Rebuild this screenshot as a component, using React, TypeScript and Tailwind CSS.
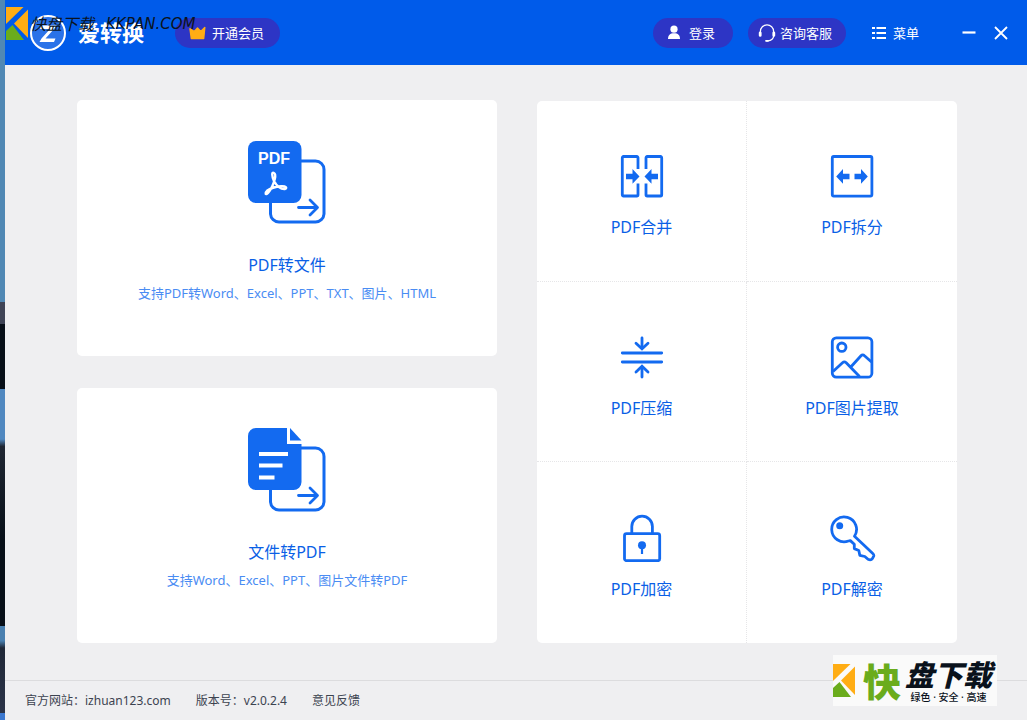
import type { ReactNode } from 'react';

const sans = "font-['Noto_Sans','Noto_Sans_CJK_SC',sans-serif]";

function BrandMark() {
  return (
    <svg width="36" height="36" viewBox="0 0 36 36" fill="none" aria-hidden="true">
      <circle cx="18" cy="18" r="17" fill="#2a72e8" stroke="#fff" strokeWidth="2" />
      <path d="M11 10.5H26.5L24 14L15.5 23.5H25.5L24 27H9.5L11.5 23.5L20 14H10Z" fill="#fff" />
    </svg>
  );
}

function KMark() {
  return (
    <svg width="22" height="33" viewBox="0 0 22 33" className="shrink-0" aria-hidden="true">
      <path d="M0 0H17.5L0 17Z" fill="#ffad14" />
      <path d="M22 2.5V31L8 16.5Z" fill="#ffad14" />
      <path d="M0 33V24L6.5 18L18 33Z" fill="#6aac1c" />
    </svg>
  );
}

function CrownIcon() {
  return (
    <svg width="17" height="14" viewBox="0 0 17 14" fill="#ffad14" stroke="#ffad14" strokeLinejoin="round" aria-hidden="true">
      <path d="M1 2.8L5.3 5.5L8.5 2L11.7 5.5L15.8 1.5L14.7 12.5H2.3Z" strokeWidth="1.4" />
    </svg>
  );
}

function UserIcon() {
  return (
    <svg width="14" height="15" viewBox="0 0 14 15" fill="#fff" aria-hidden="true">
      <circle cx="7" cy="4.2" r="3.6" />
      <path d="M1 14C1 10 3 8.2 7 8.2S13 10 13 14Z" />
    </svg>
  );
}

function HeadsetIcon() {
  return (
    <svg width="18" height="18" viewBox="0 0 18 18" fill="none" stroke="#fff" aria-hidden="true">
      <path d="M2.4 9V7.4A6.6 6.6 0 0 1 15.6 7.4V12C15.6 14.4 13.4 16.8 10 16.8H8.2" strokeWidth="1.2" />
      <path d="M2.2 8.8V11.4M15.8 8.8V11.4" strokeWidth="2.8" strokeLinecap="round" />
      <path d="M8 16.8H10" strokeWidth="1.8" strokeLinecap="round" />
    </svg>
  );
}

function ListIcon() {
  return (
    <svg width="14" height="14" viewBox="0 0 14 14" fill="none" stroke="#fff" strokeWidth="1.8" aria-hidden="true">
      <path d="M0 2H3M0 7H3M0 12H3M4.5 2H14M4.5 7H14M4.5 12H14" />
    </svg>
  );
}

function BackPage({ top, bottom }: { top: number; bottom: number }) {
  const arrowY = bottom - 14.5;
  return (
    <g fill="none" stroke="#136af0" strokeWidth="3">
      <path d={`M53 ${top}H67.5A8.5 8.5 0 0 1 76 ${top + 8.5}V${bottom - 8}A8.5 8.5 0 0 1 67.5 ${bottom}H31A8.5 8.5 0 0 1 22.5 ${bottom - 8}V61`} />
      <path
        d={`M50.5 ${arrowY}H69M62 ${arrowY - 7.5}L69.5 ${arrowY}L62 ${arrowY + 7.5}`}
        strokeWidth="2.8"
        strokeLinecap="round"
        strokeLinejoin="round"
      />
    </g>
  );
}

function PdfToFileIcon() {
  return (
    <svg width="78" height="84" viewBox="0 0 78 84" aria-hidden="true">
      <BackPage top={20} bottom={81} />
      <rect width="53.5" height="62" rx="8" fill="#136af0" />
      <text x="10" y="23" fontSize="16" fontWeight="700" fill="#fff" className="font-['Liberation_Sans',sans-serif]">
        PDF
      </text>
      <path
        d="M26 32C23.5 30.5 23.8 35 26 40C28.5 45 33 48.5 37 48C39.5 47 38 44.8 33 45.2C28 45.6 22 47.5 19 49.8C16.5 52 17.5 54.5 20 52C23 48.5 25.5 43 26.8 38C27.5 35 27.2 32.5 26 32Z"
        fill="none"
        stroke="#fff"
        strokeWidth="2.4"
        strokeLinejoin="round"
      />
    </svg>
  );
}

function FileToPdfIcon() {
  return (
    <svg width="78" height="84" viewBox="0 0 78 84" aria-hidden="true">
      <BackPage top={20} bottom={82} />
      <path d="M39 0H8A8 8 0 0 0 0 8V54A8 8 0 0 0 8 62H45.5A8 8 0 0 0 53.5 54V16H39Z" fill="#136af0" />
      <path d="M39 0H42V13H55V16H39Z" fill="#fff" />
      <path d="M42 0L53.5 12.5H42Z" fill="#136af0" />
      <path d="M11 26H40M11 37.5H34.5M11 49.5H26.5" stroke="#fff" strokeWidth="4" />
    </svg>
  );
}

function ToolSvg({ children }: { children: ReactNode }) {
  return (
    <svg
      width="48"
      height="48"
      viewBox="0 0 48 48"
      fill="none"
      stroke="#136af0"
      strokeWidth="2.8"
      strokeLinecap="butt"
      strokeLinejoin="round"
      aria-hidden="true"
    >
      {children}
    </svg>
  );
}

const tools = [
  {
    label: 'PDF合并',
    icon: (
      <ToolSvg>
        <path d="M20 17V5.8A1.2 1.2 0 0 0 18.8 4.5H5.5A1.2 1.2 0 0 0 4.3 5.8V42.8A1.2 1.2 0 0 0 5.5 44H18.8A1.2 1.2 0 0 0 20 42.8V31.5" />
        <path d="M28 17V5.8A1.2 1.2 0 0 1 29.2 4.5H42.5A1.2 1.2 0 0 1 43.7 5.8V42.8A1.2 1.2 0 0 1 42.5 44H29.2A1.2 1.2 0 0 1 28 42.8V31.5" />
        <path d="M8 21.8H14.5V17L21.5 24.5L14.5 31.8V27.2H8ZM40 21.8H33.5V17L26.5 24.5L33.5 31.8V27.2H40Z" fill="#136af0" stroke="none" />
      </ToolSvg>
    ),
  },
  {
    label: 'PDF拆分',
    icon: (
      <ToolSvg>
        <rect x="4.3" y="4.5" width="39.6" height="39.6" rx="1.5" />
        <path d="M21.5 21.8H15V17L8.2 24.5L15 31.8V27.2H21.5ZM26.5 21.8H33V17L39.8 24.5L33 31.8V27.2H26.5Z" fill="#136af0" stroke="none" />
      </ToolSvg>
    ),
  },
  {
    label: 'PDF压缩',
    icon: (
      <ToolSvg>
        <path d="M4.3 20H43.7M4.3 29H43.7M24 5V15M24 44V34" strokeLinecap="round" />
        <path d="M18 10.2L24 15.8L30 10.2M18 39L24 33.3L30 39" strokeLinecap="round" strokeLinejoin="miter" />
      </ToolSvg>
    ),
  },
  {
    label: 'PDF图片提取',
    icon: (
      <ToolSvg>
        <rect x="4.3" y="4.8" width="39.6" height="39.4" rx="4" />
        <circle cx="13.8" cy="14.2" r="4.2" />
        <path d="M5 38.5L14.5 29.7Q16.3 28 18.2 29.7L31.5 43.5M23 33.8L33 22.8Q34.7 21 36.5 22.8L43.5 29" />
      </ToolSvg>
    ),
  },
  {
    label: 'PDF加密',
    icon: (
      <ToolSvg>
        <rect x="6.5" y="19.7" width="35.2" height="27" rx="2" />
        <path d="M13.8 19.5V12.5A10.3 10.3 0 0 1 34.4 12.5V19.5" />
        <circle cx="24" cy="31.3" r="4" fill="#136af0" stroke="none" />
        <path d="M24 33V40" strokeWidth="2.2" />
      </ToolSvg>
    ),
  },
  {
    label: 'PDF解密',
    icon: (
      <ToolSvg>
        <path d="M26.5 22.2A12.4 12.4 0 1 0 20.5 27L22.3 26.6L26.3 30.3V34.6L30.8 36.5L31.8 41.3L36.8 42.5L40 45.3Q43 46.7 44.5 44.5L45.8 41.8Q46 40.5 44.8 39.5Z" />
        <circle cx="11.7" cy="11.7" r="3.5" fill="#136af0" stroke="none" />
      </ToolSvg>
    ),
  },
];

function ConvertCard({ icon, title, note }: { icon: ReactNode; title: string; note: string }) {
  return (
    <button type="button" className="flex flex-1 flex-col items-center justify-center rounded-[5px] bg-white px-4 pb-3">
      {icon}
      <span className="mt-7 text-base leading-6 text-[#0a5fe6]">{title}</span>
      <span className="mt-1.5 text-[13px] leading-5 text-[#4a8cf3]">{note}</span>
    </button>
  );
}

function Header() {
  return (
    <header className="flex h-[65px] shrink-0 items-center bg-[#005bea] pr-[18px] pl-[25px] text-[13px] leading-5 text-white">
      <BrandMark />
      <h1 className="ml-3 pb-0.5 text-[22px] leading-8 font-bold">爱转换</h1>
      <button type="button" className="ml-[31px] flex h-[30px] items-center gap-1.5 rounded-full bg-[#2d35c5] pr-4 pl-3.5">
        <CrownIcon />
        开通会员
      </button>
      <div className="ml-auto flex items-center">
        <button type="button" className="flex h-[30px] items-center gap-2 rounded-full bg-[#2d35c5] pr-[18px] pl-3.5">
          <UserIcon />
          登录
        </button>
        <button type="button" className="ml-[15px] flex h-[30px] items-center gap-1 rounded-full bg-[#2d35c5] pr-3.5 pl-2.5">
          <HeadsetIcon />
          咨询客服
        </button>
        <button type="button" className="ml-[26px] flex items-center gap-[7px]">
          <ListIcon />
          菜单
        </button>
        <button type="button" aria-label="最小化" className="ml-[42px]">
          <svg width="16" height="16" viewBox="0 0 16 16" stroke="#fff" strokeWidth="2.2" aria-hidden="true">
            <path d="M1.5 7.5H14.5" />
          </svg>
        </button>
        <button type="button" aria-label="关闭" className="ml-4">
          <svg width="16" height="16" viewBox="0 0 16 16" stroke="#fff" strokeWidth="1.8" aria-hidden="true">
            <path d="M2 2L14 14M14 2L2 14" />
          </svg>
        </button>
      </div>
    </header>
  );
}

export default function App() {
  return (
    <div className={`relative flex min-h-screen ${sans}`}>
      <div className="w-[5px] shrink-0 bg-[linear-gradient(to_bottom,#5088b4_42%,#3f4456_42%,#3f4456_45%,#070f18_45%,#070f18_54%,#5088c0_54%,#5088c0_61%,#202733_62%,#070f18_75%,#070f18_87%,#4a80b0_87%,#4a80b0_89%,#202838_90%,#2b3348_99%,#3c78d0_99%)]" />
      <div className="flex min-w-0 flex-1 flex-col bg-[#efeff1]">
        <Header />
        <main className="grid flex-1 grid-cols-2 gap-10 pt-[35px] pr-[70px] pb-[37px] pl-[72px]">
          <section className="flex flex-col gap-8">
            <ConvertCard icon={<PdfToFileIcon />} title="PDF转文件" note="支持PDF转Word、Excel、PPT、TXT、图片、HTML" />
            <ConvertCard icon={<FileToPdfIcon />} title="文件转PDF" note="支持Word、Excel、PPT、图片文件转PDF" />
          </section>
          <section className="mt-px grid grid-cols-2 grid-rows-3 overflow-hidden rounded-[5px] bg-white">
            {tools.map((tool, i) => (
              <button
                key={tool.label}
                type="button"
                className={`flex flex-col items-center justify-center border-dotted border-[#e6e6e8] pt-2.5 ${i % 2 === 0 ? 'border-r' : ''} ${i < 4 ? 'border-b' : ''}`}
              >
                {tool.icon}
                <span className="mt-[15px] text-base leading-6 text-[#0a5fe6]">{tool.label}</span>
              </button>
            ))}
          </section>
        </main>
        <footer className="flex h-10 shrink-0 items-center gap-[25px] border-t border-[#dcdcde] px-5 text-xs leading-5 text-[#3c4350]">
          <span>
            官方网站：<a href="https://izhuan123.com">izhuan123.com</a>
          </span>
          <span>版本号：v2.0.2.4</span>
          <button type="button">意见反馈</button>
        </footer>
      </div>

      <div className="pointer-events-none absolute top-[7px] left-1.5 flex items-center gap-0.5 text-[#0b1320]">
        <KMark />
        <span className="flex items-center gap-3 whitespace-nowrap italic">
          <span className="text-base leading-6">快盘下载</span>
          <span className="font-['DejaVu_Sans',sans-serif] text-[15px] leading-6">KKPAN.COM</span>
        </span>
      </div>

      <div className="pointer-events-none absolute right-[30px] bottom-3.5 flex h-[51px] w-[164px] items-center bg-[#fafafa] whitespace-nowrap text-[#0a121c]">
        <KMark />
        <span className="ml-2 text-[38px] leading-[48px] font-black text-[#6aac1c]">快</span>
        <span className="ml-1 flex flex-col items-center">
          <span className="text-[29px] leading-8 font-black italic">盘下载</span>
          <span className="text-[10px] leading-3 font-medium">绿色 · 安全 · 高速</span>
        </span>
      </div>
    </div>
  );
}
